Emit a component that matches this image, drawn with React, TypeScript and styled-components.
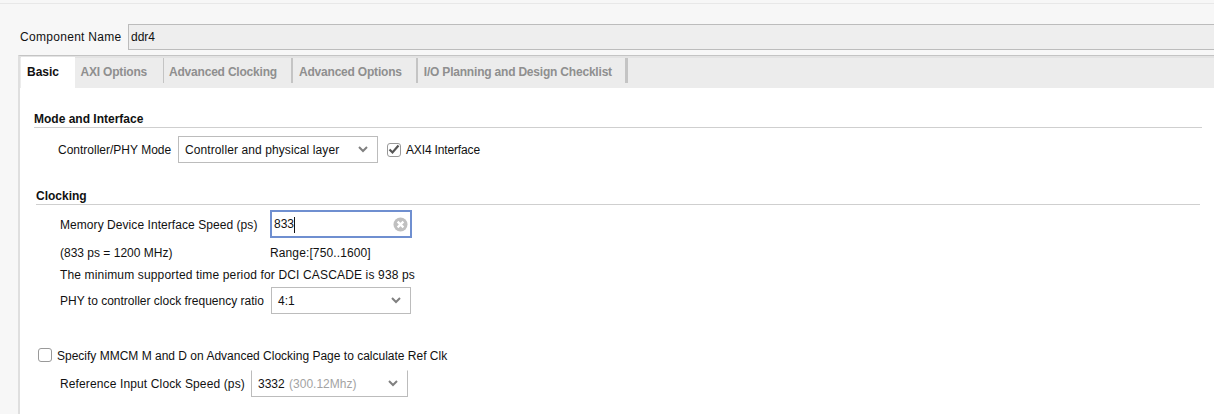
import styled, { createGlobalStyle } from 'styled-components'

const GlobalStyle = createGlobalStyle`
  html, body { margin: 0; padding: 0; background: #f7f7f7; }
  body { font-family: "Liberation Sans", Arial, sans-serif; font-size: 12px; color: #111; }
  * { box-sizing: border-box; }
`

const Page = styled.div`
  width: 1214px;
  height: 414px;
  overflow: hidden;
  background: #f7f7f7;
  border-top: 1px solid #e8e8e8;
  margin-top: 3px;
  padding-top: 20px;
  display: flex;
  flex-direction: column;
`

const NameRow = styled.div`
  display: flex;
  align-items: center;
  height: 26px;
  padding-left: 20px;
  gap: 7px;
`

const NameInput = styled.div`
  flex: 1;
  height: 26px;
  line-height: 24px;
  padding-left: 2px;
  background: #eeeeee;
  border: 1px solid #bcbcbc;
  border-right: none;
`

const TabPanel = styled.div`
  margin: 5px 0 0 18px;
  flex: 1;
  border-top: 1px solid #c4c4c4;
  border-left: 2px solid #dfdfdf;
  background: #fff;
  display: flex;
  flex-direction: column;
`

const TabBar = styled.div`
  display: flex;
  height: 32px;
  background: #ececec;
  border-top: 2px solid #e3e3e3;
  padding-left: 1px;
`

const Tab = styled.div<{ $active?: boolean; $sep?: number; $pr: number }>`
  height: ${p => (p.$active ? '32px' : '25px')};
  margin-top: ${p => (p.$active ? '-1px' : '0')};
  line-height: ${p => (p.$active ? '30px' : '28px')};
  background: ${p => (p.$active ? '#fff' : 'transparent')};
  color: ${p => (p.$active ? '#111' : '#8f8f8f')};
  font-weight: bold;
  letter-spacing: ${p => (p.$active ? '0' : '-0.2px')};
  padding: 0 ${p => p.$pr}px 0 ${p => (p.$active ? 6 : 5.5)}px;
  border-right: ${p => p.$sep ?? 0}px solid #c4c4c4;
`

const Body = styled.div`
  padding: 22px 0 0 14px;
`

const SectionTitle = styled.div<{ $indent: number; $end: number; $top: number }>`
  margin: ${p => p.$top}px 0 0 ${p => p.$indent}px;
  width: ${p => p.$end}px;
  height: 18px;
  line-height: 19px;
  font-weight: bold;
  border-bottom: 1px solid #cfcfcf;
`

const Row = styled.div<{ $indent: number; $top: number; $h?: number; $gap?: number }>`
  display: flex;
  align-items: center;
  margin: ${p => p.$top}px 0 0 ${p => p.$indent}px;
  height: ${p => p.$h ?? 14}px;
  gap: ${p => p.$gap ?? 0}px;
`

const Field = styled.div<{ $w: number; $h?: number; $noTop?: boolean }>`
  width: ${p => p.$w}px;
  height: ${p => p.$h ?? 27}px;
  display: flex;
  align-items: center;
  justify-content: space-between;
  padding: 0 9px 0 6px;
  background: #fff;
  border: 1px solid #bcbcbc;
  border-top-color: ${p => (p.$noTop ? 'transparent' : '#bcbcbc')};
`

const Muted = styled.span`
  color: #a3a3a3;
  margin-left: 1px;
`

const SpeedInput = styled.div`
  width: 142px;
  height: 28px;
  display: flex;
  align-items: center;
  justify-content: space-between;
  padding: 0 2px 0 2px;
  background: #fff;
  border: 2px solid #6f8fd0;
`

const Caret = styled.span`
  display: inline-block;
  width: 1px;
  height: 16px;
  background: #111;
  vertical-align: middle;
`

const Box = styled.span<{ $ml?: number }>`
  width: 14px;
  height: 14px;
  flex: none;
  margin-left: ${p => p.$ml ?? 0}px;
  display: flex;
  align-items: center;
  justify-content: center;
  background: #fff;
  border: 1.5px solid #999;
  border-radius: 3px;
`

const Text = styled.span<{ $w?: number; $ls?: number; $down?: boolean; $ml?: number }>`
  ${p => (p.$w ? `width: ${p.$w}px; flex: none;` : '')}
  white-space: nowrap;
  margin-left: ${p => p.$ml ?? 0}px;
  letter-spacing: ${p => p.$ls ?? 0}px;
  padding-top: ${p => (p.$down ? 2 : 0)}px;
`

const Chevron = () => (
  <svg width="10" height="7" viewBox="0 0 10 7" fill="none">
    <path d="M1 1l4 4 4-4" stroke="#808080" strokeWidth="2" />
  </svg>
)

const Check = () => (
  <svg width="12" height="12" viewBox="0 0 12 12" fill="none">
    <path d="M1.5 5.5l3 3 6-7" stroke="#555" strokeWidth="2.2" />
  </svg>
)

const ClearIcon = () => (
  <svg width="15" height="15" viewBox="0 0 15 15">
    <circle cx="7.5" cy="7.5" r="7" fill="#c0c0c0" />
    <path d="M4.6 4.6l5.8 5.8M10.4 4.6l-5.8 5.8" stroke="#fff" strokeWidth="2.2" />
  </svg>
)

const tabs = [
  { label: 'Basic', active: true, pr: 16 },
  { label: 'AXI Options', sep: 1, pr: 15.5 },
  { label: 'Advanced Clocking', sep: 2, pr: 14.5 },
  { label: 'Advanced Options', sep: 2, pr: 14.5 },
  { label: 'I/O Planning and Design Checklist', sep: 3, pr: 13.5 },
]

export default function App() {
  return (
    <>
      <GlobalStyle />
      <Page>
        <NameRow>
          <Text $w={101} $ls={0.3}>Component Name</Text>
          <NameInput>ddr4</NameInput>
        </NameRow>
        <TabPanel>
          <TabBar>
            {tabs.map(t => (
              <Tab key={t.label} $active={t.active} $sep={t.sep} $pr={t.pr}>{t.label}</Tab>
            ))}
          </TabBar>
          <Body>
            <SectionTitle $indent={0} $end={1168} $top={0}>Mode and Interface</SectionTitle>
            <Row $indent={24} $top={8} $h={27}>
              <Text $w={120}>Controller/PHY Mode</Text>
              <Field $w={200}>
                <Text $ls={0.1}>Controller and physical layer</Text>
                <Chevron />
              </Field>
              <Box $ml={9}><Check /></Box>
              <Text $ml={5} $ls={-0.15}>AXI4 Interface</Text>
            </Row>
            <SectionTitle $indent={2} $end={1164} $top={24}>Clocking</SectionTitle>
            <Row $indent={26} $top={5} $h={28}>
              <Text $w={210} $ls={0.06} $down>Memory Device Interface Speed (ps)</Text>
              <SpeedInput>
                <Text $down>833<Caret /></Text>
                <ClearIcon />
              </SpeedInput>
            </Row>
            <Row $indent={26} $top={7}>
              <Text $w={210} $down>(833 ps = 1200 MHz)</Text>
              <Text $ls={0.12} $down>Range:[750..1600]</Text>
            </Row>
            <Row $indent={26} $top={8}>
              <Text $ls={0.15} $down>The minimum supported time period for DCI CASCADE is 938 ps</Text>
            </Row>
            <Row $indent={26} $top={6} $h={27}>
              <Text $w={211}>PHY to controller clock frequency ratio</Text>
              <Field $w={140}>
                <span>4:1</span>
                <Chevron />
              </Field>
            </Row>
            <Row $indent={4} $top={34} $gap={5}>
              <Box />
              <Text $down>Specify MMCM M and D on Advanced Clocking Page to calculate Ref Clk</Text>
            </Row>
            <Row $indent={26} $top={8} $h={27}>
              <Text $w={191} $ls={0.13}>Reference Input Clock Speed (ps)</Text>
              <Field $w={157} $noTop>
                <span>3332 <Muted>(300.12Mhz)</Muted></span>
                <Chevron />
              </Field>
            </Row>
          </Body>
        </TabPanel>
      </Page>
    </>
  )
}
